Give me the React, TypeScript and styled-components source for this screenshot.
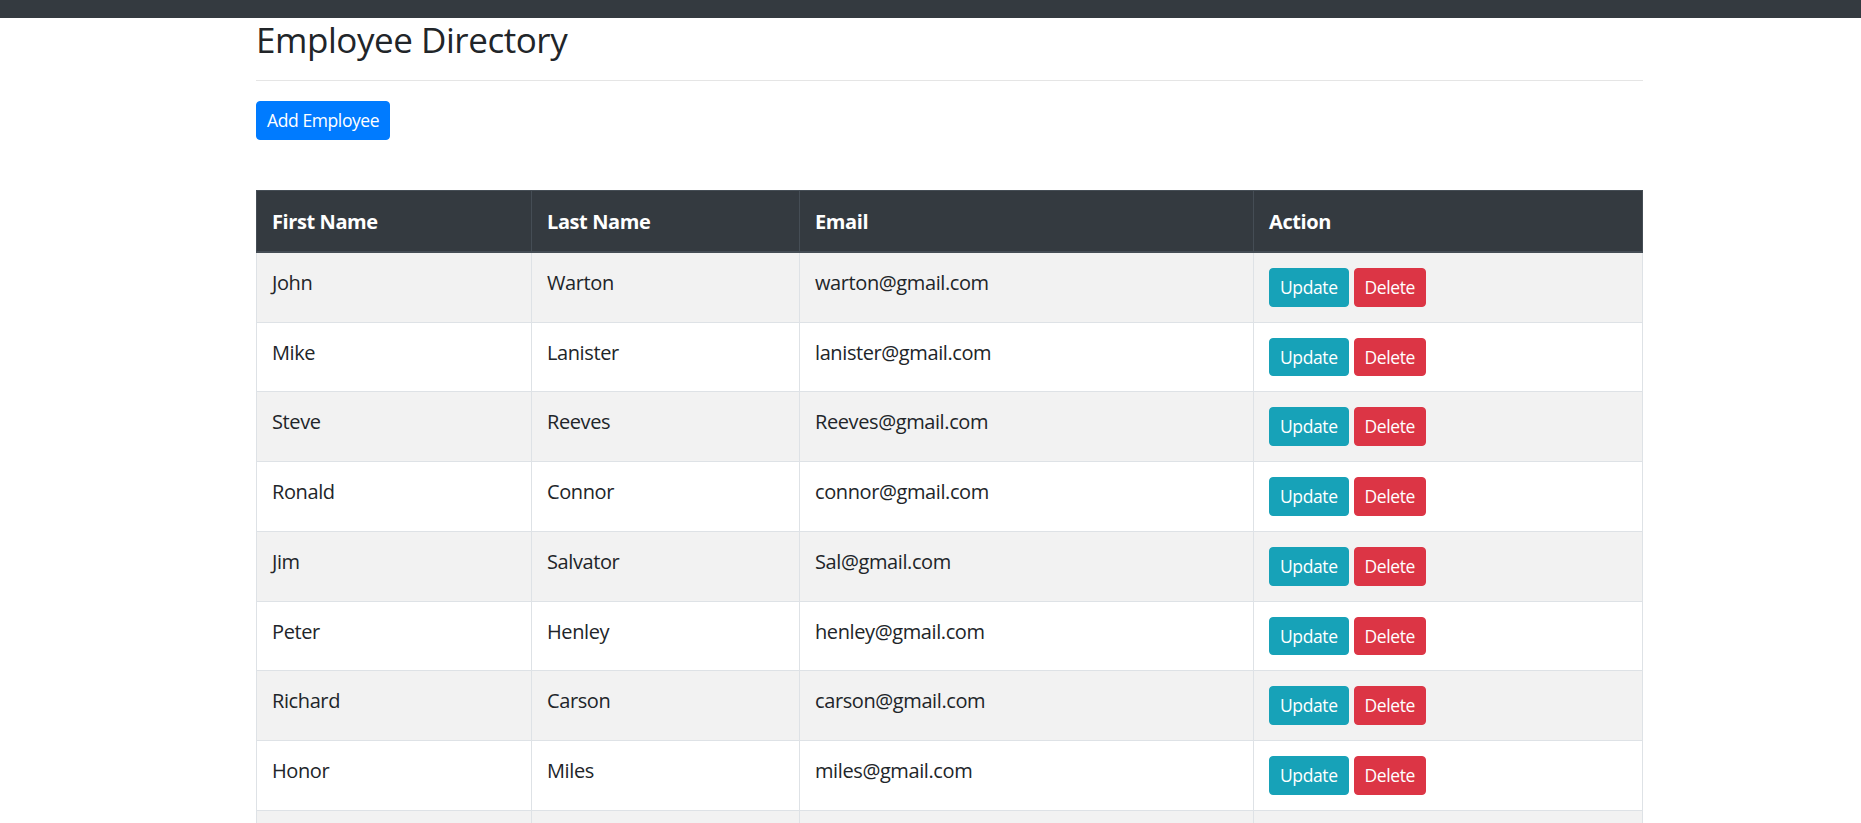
import styled, { createGlobalStyle } from 'styled-components';

type Employee = {
  firstName: string;
  lastName: string;
  email: string;
};

const employees: Employee[] = [
  { firstName: 'John', lastName: 'Warton', email: 'warton@gmail.com' },
  { firstName: 'Mike', lastName: 'Lanister', email: 'lanister@gmail.com' },
  { firstName: 'Steve', lastName: 'Reeves', email: 'Reeves@gmail.com' },
  { firstName: 'Ronald', lastName: 'Connor', email: 'connor@gmail.com' },
  { firstName: 'Jim', lastName: 'Salvator', email: 'Sal@gmail.com' },
  { firstName: 'Peter', lastName: 'Henley', email: 'henley@gmail.com' },
  { firstName: 'Richard', lastName: 'Carson', email: 'carson@gmail.com' },
  { firstName: 'Honor', lastName: 'Miles', email: 'miles@gmail.com' },
  { firstName: 'Tony', lastName: 'Stark', email: 'stark@gmail.com' },
];

export default function App() {
  return (
    <>
      <GlobalStyle />
      <TopBar />
      <Container>
        <Heading>Employee Directory</Heading>
        <Divider />
        <Button $variant="primary">Add Employee</Button>
        <Table>
          <colgroup>
            <col style={{ width: 275 }} />
            <col style={{ width: 268 }} />
            <col style={{ width: 454 }} />
            <col />
          </colgroup>
          <thead>
            <tr>
              <Th>First Name</Th>
              <Th>Last Name</Th>
              <Th>Email</Th>
              <Th>Action</Th>
            </tr>
          </thead>
          <tbody>
            {employees.map((employee) => (
              <Row key={employee.email}>
                <Td>{employee.firstName}</Td>
                <Td>{employee.lastName}</Td>
                <Td>{employee.email}</Td>
                <Td>
                  <Actions>
                    <Button $variant="info">Update</Button>
                    <Button $variant="danger">Delete</Button>
                  </Actions>
                </Td>
              </Row>
            ))}
          </tbody>
        </Table>
      </Container>
    </>
  );
}

const GlobalStyle = createGlobalStyle`
  body {
    margin: 0;
    background: #fff;
    color: #212529;
    font-family: "Open Sans", "Noto Sans", sans-serif;
    font-size: 20px;
    line-height: 1.5;
    letter-spacing: -0.4px;
  }
`;

const TopBar = styled.div`
  height: 18px;
  background-color: #343a40;
`;

const Container = styled.div`
  width: 1387px;
  margin-left: 256px;
`;

const Heading = styled.h3`
  margin: 0;
  padding-top: 1px;
  font-size: 35px;
  font-weight: 500;
  line-height: 42px;
  letter-spacing: -0.45px;
  color: #212529;
`;

const Divider = styled.hr`
  margin: 19px 0 20px;
  border: 0;
  border-top: 1px solid rgba(0, 0, 0, 0.1);
`;

const buttonColors = {
  primary: '#007bff',
  info: '#17a2b8',
  danger: '#dc3545',
};

const Button = styled.button<{ $variant: keyof typeof buttonColors }>`
  display: inline-block;
  padding: 5px 10px;
  font-family: inherit;
  font-size: 17.5px;
  line-height: 26.75px;
  letter-spacing: -0.4px;
  color: #fff;
  background-color: ${(p) => buttonColors[p.$variant]};
  border: 1px solid ${(p) => buttonColors[p.$variant]};
  border-radius: 4px;
  cursor: pointer;
`;

const Table = styled.table`
  width: 100%;
  margin-top: 50px;
  border-collapse: collapse;
  table-layout: fixed;
  border: 1px solid #dee2e6;
`;

const Th = styled.th`
  padding: 16px 15px 14px;
  text-align: left;
  vertical-align: bottom;
  font-weight: 700;
  color: #fff;
  background-color: #343a40;
  border: 1px solid #454d55;
  border-bottom-width: 2.5px;
`;

const Row = styled.tr`
  &:nth-of-type(odd) {
    background-color: #f2f2f2;
  }
`;

const Td = styled.td`
  padding: 15px;
  vertical-align: top;
  border: 1px solid #dee2e6;
`;

const Actions = styled.div`
  display: flex;
  gap: 5px;
`;
